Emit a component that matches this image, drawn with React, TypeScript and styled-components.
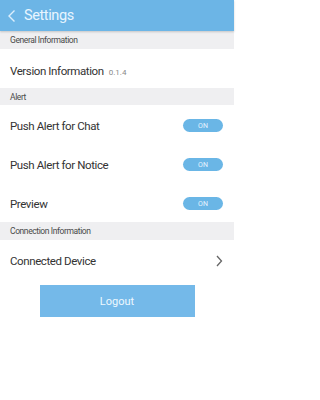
import React from "react";
import styled, { createGlobalStyle } from "styled-components";

const GlobalStyle = createGlobalStyle`
  html, body {
    margin: 0;
    padding: 0;
    background: #ffffff;
    font-family: Roboto, "Noto Sans", sans-serif;
  }
`;

const Page = styled.div`
  width: 234px;
  height: 400px;
  background: #ffffff;
  display: flex;
  flex-direction: column;
`;

const Header = styled.div`
  height: 31px;
  background: #6cb5e6;
  display: flex;
  align-items: center;
  padding-left: 7px;
  gap: 7px;
  box-shadow: 0 1px 2px rgba(0, 0, 0, 0.18);
  position: relative;
  z-index: 1;
`;

const Title = styled.span`
  color: #e8f5ff;
  font-size: 14.5px;
  letter-spacing: -0.4px;
`;

const SectionHeader = styled.div<{ h: number }>`
  height: ${(p) => p.h}px;
  background: #efeff1;
  display: flex;
  align-items: center;
  padding-left: 10px;
  font-size: 8.5px;
  letter-spacing: -0.4px;
  color: #4a4a4a;
`;

const Row = styled.div`
  height: 39px;
  display: flex;
  align-items: center;
  padding: 2px 11px 0 10px;
  box-sizing: border-box;
  justify-content: space-between;
`;

const Label = styled.span`
  font-size: 11.5px;
  letter-spacing: -0.4px;
  color: #333333;
`;

const Version = styled.span`
  font-size: 8px;
  color: #8a8a8a;
  margin-left: 5px;
`;

const Toggle = styled.div`
  width: 40px;
  height: 13px;
  border-radius: 7px;
  background: #6ab6e6;
  color: #e6f4ff;
  font-size: 7px;
  display: flex;
  align-items: center;
  justify-content: center;
`;

const ButtonWrap = styled.div`
  display: flex;
  justify-content: center;
  padding-top: 6px;
`;

const LogoutButton = styled.div`
  width: 155px;
  height: 32px;
  background: #74b9e9;
  color: #eef8ff;
  font-size: 11px;
  display: flex;
  align-items: center;
  justify-content: center;
`;

const BackIcon = () => (
  <svg width="10" height="14" viewBox="0 0 10 14">
    <path d="M7.5 1.5 L2 7 L7.5 12.5" fill="none" stroke="#dceffc" strokeWidth="1.4" />
  </svg>
);

const ChevronRight = () => (
  <svg width="7" height="12" viewBox="0 0 7 12">
    <path d="M1 1 L5.5 6 L1 11" fill="none" stroke="#666" strokeWidth="1.3" />
  </svg>
);

const toggles = ["Push Alert for Chat", "Push Alert for Notice", "Preview"];

export default function App() {
  return (
    <Page>
      <GlobalStyle />
      <Header>
        <BackIcon />
        <Title>Settings</Title>
      </Header>
      <SectionHeader h={18}>General Information</SectionHeader>
      <Row>
        <div>
          <Label>Version Information</Label>
          <Version>0.1.4</Version>
        </div>
      </Row>
      <SectionHeader h={17}>Alert</SectionHeader>
      {toggles.map((t) => (
        <Row key={t}>
          <Label>{t}</Label>
          <Toggle>ON</Toggle>
        </Row>
      ))}
      <SectionHeader h={18}>Connection Information</SectionHeader>
      <Row>
        <Label>Connected Device</Label>
        <ChevronRight />
      </Row>
      <ButtonWrap>
        <LogoutButton>Logout</LogoutButton>
      </ButtonWrap>
    </Page>
  );
}
